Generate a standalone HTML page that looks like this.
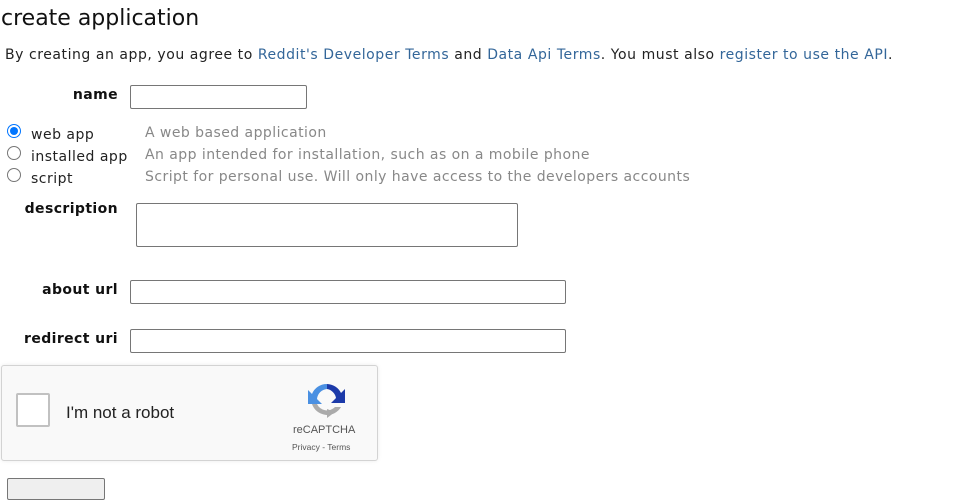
<!DOCTYPE html>
<html><head><style>
body{margin:0;width:956px;height:483px;background:#fff;font-family:"DejaVu Sans",Verdana,sans-serif;position:relative;overflow:hidden}
.a{position:absolute;white-space:nowrap}
.t{font-size:14px;color:#222;letter-spacing:0.5px}
.b{font-size:14px;font-weight:bold;color:#111;text-align:right;width:110px;letter-spacing:0.4px}
.g{font-size:14px;color:#888;letter-spacing:0.45px}
a{color:#336699;text-decoration:none}
.in{position:absolute;border:1px solid #767676;border-radius:2px;background:#fff;box-sizing:border-box}
.r{position:absolute;width:14px;height:14px;border:1px solid #767676;border-radius:50%;box-sizing:border-box}
</style></head><body>
<div class="a" style="left:1px;top:6px;font-size:22px;color:#111">create application</div>
<div class="a t" style="left:5px;top:47px;letter-spacing:0.55px">By creating an app, you agree to <a>Reddit's Developer Terms</a> and <a>Data Api Terms</a>. You must also <a>register to use the API</a>.</div>
<div class="a b" style="left:8px;top:87px">name</div>
<div class="in" style="left:130px;top:85px;width:177px;height:24px"></div>
<div class="r" style="left:7px;top:124px;border:1px solid #0075ff"><div style="position:absolute;left:2px;top:2px;width:8px;height:8px;border-radius:50%;background:#0075ff"></div></div>
<div class="r" style="left:7px;top:146px"></div>
<div class="r" style="left:7px;top:168px"></div>
<div class="a t" style="left:31px;top:127px">web app</div>
<div class="a t" style="left:31px;top:149px">installed app</div>
<div class="a t" style="left:31px;top:171px">script</div>
<div class="a g" style="left:145px;top:125px">A web based application</div>
<div class="a g" style="left:145px;top:147px">An app intended for installation, such as on a mobile phone</div>
<div class="a g" style="left:145px;top:169px">Script for personal use. Will only have access to the developers accounts</div>
<div class="a b" style="left:8px;top:201px">description</div>
<div class="in" style="left:136px;top:203px;width:382px;height:44px"></div>
<div class="a b" style="left:8px;top:282px">about url</div>
<div class="in" style="left:130px;top:280px;width:436px;height:24px"></div>
<div class="a b" style="left:8px;top:331px">redirect uri</div>
<div class="in" style="left:130px;top:329px;width:436px;height:24px"></div>
<div style="position:absolute;left:1px;top:365px;width:375px;height:94px;background:#f9f9f9;border:1px solid #d3d3d3;border-radius:3px;box-shadow:0 0 4px rgba(0,0,0,.08)"></div>
<div style="position:absolute;left:16px;top:393px;width:34px;height:34px;background:#fff;border:2px solid #c1c1c1;border-radius:2px;box-sizing:border-box"></div>
<div class="a" style="left:66px;top:403px;font-size:17px;color:#222;font-family:'Liberation Sans',sans-serif">I'm not a robot</div>
<svg style="position:absolute;left:307px;top:380px" width="40" height="40" viewBox="0 0 40 40">
<path d="M20 4 A16 16 0 0 0 5 14 L1 10 L1 24 L15 24 L10 19 A11 11 0 0 1 20 9 Z" fill="#4a90e2"/>
<path d="M20 4 A16 16 0 0 1 34 13 L38 9 L38 23 L24 23 L29 18 A11 11 0 0 0 20 9 Z" fill="#1c3aa9"/>
<path d="M5 24 A16 16 0 0 0 34 27 L28 27 A11 11 0 0 1 10 24 Z M20 29 L20 38 L28 32 Z" fill="#ababab"/>
</svg>
<div class="a" style="left:293px;top:424px;font-size:11px;color:#555;font-family:'Liberation Sans',sans-serif">reCAPTCHA</div>
<div class="a" style="left:292px;top:442px;font-size:8.5px;color:#555;font-family:'Liberation Sans',sans-serif">Privacy - Terms</div>
<div style="position:absolute;left:7px;top:478px;width:96px;height:20px;border:1px solid #767676;border-radius:2px;background:#efefef"></div>
</body></html>
